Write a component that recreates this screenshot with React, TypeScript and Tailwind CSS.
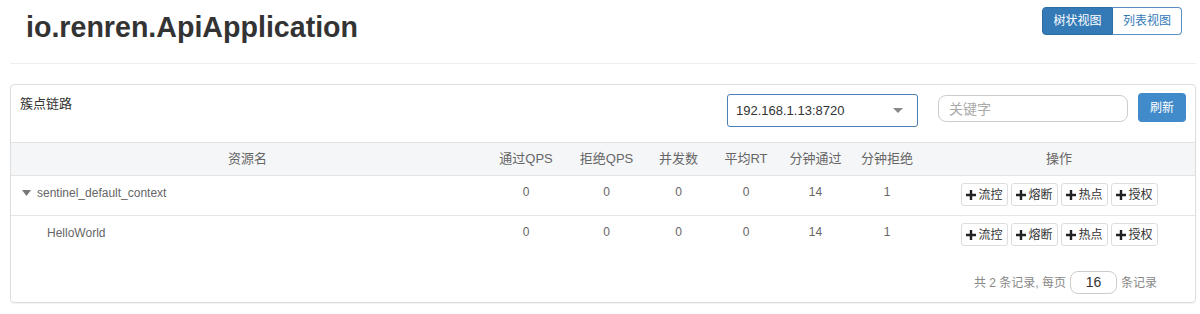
const COLS = "grid grid-cols-[473px_84px_77px_67px_68px_71px_72px_1fr]";
const CN = { fontFamily: '"Liberation Sans", Arial, "Noto Sans CJK SC", sans-serif' };

const HEADERS = ["资源名", "通过QPS", "拒绝QPS", "并发数", "平均RT", "分钟通过", "分钟拒绝", "操作"];
const ACTIONS = ["流控", "熔断", "热点", "授权"];

const ROWS = [
  { name: "sentinel_default_context", root: true, vals: ["0", "0", "0", "0", "14", "1"] },
  { name: "HelloWorld", root: false, vals: ["0", "0", "0", "0", "14", "1"] },
];

function PlusIcon() {
  return (
    <svg width="10" height="10" viewBox="0 0 10 10" className="shrink-0">
      <path d="M3.8 0h2.4v3.8H10v2.4H6.2V10H3.8V6.2H0V3.8h3.8z" fill="#222" />
    </svg>
  );
}

function Caret() {
  return (
    <svg width="9" height="6" viewBox="0 0 9 6" className="shrink-0">
      <path d="M0 0h9L4.5 6z" fill="#777" />
    </svg>
  );
}

export default function App() {
  return (
    <div className="w-[1200px] h-[314px] bg-white overflow-hidden" style={CN}>
      <div className="w-[1186px] ml-[10px]">
        <div className="flex justify-between items-start h-[64px] border-b border-[#eee]">
          <h1 className="pl-[16px] pt-[10px] text-[28.6px] leading-[34px] font-bold text-[#333]">
            io.renren.ApiApplication
          </h1>
          <div className="flex mt-[7px] mr-[14px] text-[12px]">
            <button className="h-[28px] w-[71px] bg-[#337ab7] text-white border border-[#2e6da4] rounded-l-[4px]">
              树状视图
            </button>
            <button className="h-[28px] w-[69px] bg-white text-[#337ab7] border border-[#5b8fc4] border-l-0 rounded-r-[4px]">
              列表视图
            </button>
          </div>
        </div>

        <div className="mt-[20px] border border-[#ddd] rounded-[4px] shadow-[0_1px_1px_rgba(0,0,0,0.05)]">
          <div className="flex justify-between items-start h-[57px]">
            <div className="pl-[9px] pt-[9px] text-[13px] text-[#333]">簇点链路</div>
            <div className="flex items-start pr-[9px]">
              <div className="mt-[9px] w-[191px] h-[33px] border border-[#4a80b4] rounded-[3px] flex items-center justify-between pl-[8px] pr-[14px] text-[13px] text-[#333]">
                <span>192.168.1.13:8720</span>
                <svg width="10" height="6" viewBox="0 0 10 6">
                  <path d="M0 0h10L5 5z" fill="#888" />
                </svg>
              </div>
              <input
                placeholder="关键字"
                className="ml-[20px] mt-[10px] w-[190px] h-[27px] border border-[#ccc] rounded-[8px] px-[10px] text-[14px] placeholder:text-[#aaa] outline-none"
              />
              <button className="ml-[10px] mt-[8px] w-[48px] h-[29px] bg-[#428bca] text-white text-[12px] rounded-[4px]">
                刷新
              </button>
            </div>
          </div>

          <div className={`${COLS} h-[34px] items-center bg-[#f5f6f8] border-y border-[#e3e3e3] text-[13px] text-[#666]`}>
            {HEADERS.map((h) => (
              <div key={h} className="text-center">
                {h}
              </div>
            ))}
          </div>

          {ROWS.map((row, i) => (
            <div
              key={row.name}
              className={`${COLS} h-[40px] pt-[8px] text-[12px] text-[#666] ${i === 0 ? "border-b border-[#e5e5e5]" : ""}`}
            >
              <div className={`flex items-center gap-[6px] h-[17px] ${row.root ? "pl-[11px]" : "pl-[36px]"}`}>
                {row.root && <Caret />}
                <span>{row.name}</span>
              </div>
              {row.vals.map((v, j) => (
                <div key={j} className="text-center leading-[17px] text-[#666]">
                  {v}
                </div>
              ))}
              <div className="flex justify-center gap-[3px] -mt-[1px] pl-[1px]">
                {ACTIONS.map((a) => (
                  <button
                    key={a}
                    className="h-[23px] w-[47px] flex items-center justify-center gap-[2px] border border-[#ddd] rounded-[3px] bg-white text-[12px] text-[#333]"
                  >
                    <PlusIcon />
                    {a}
                  </button>
                ))}
              </div>
            </div>
          ))}

          <div className="flex justify-end items-center gap-[4px] pt-[15px] pb-[8px] pr-[38px] text-[12px] text-[#888]">
            <span>共 2 条记录, 每页</span>
            <div className="w-[47px] h-[23px] border border-[#ccc] rounded-[8px] flex items-center justify-center text-[14px] text-[#333]">
              16
            </div>
            <span>条记录</span>
          </div>
        </div>
      </div>
    </div>
  );
}
